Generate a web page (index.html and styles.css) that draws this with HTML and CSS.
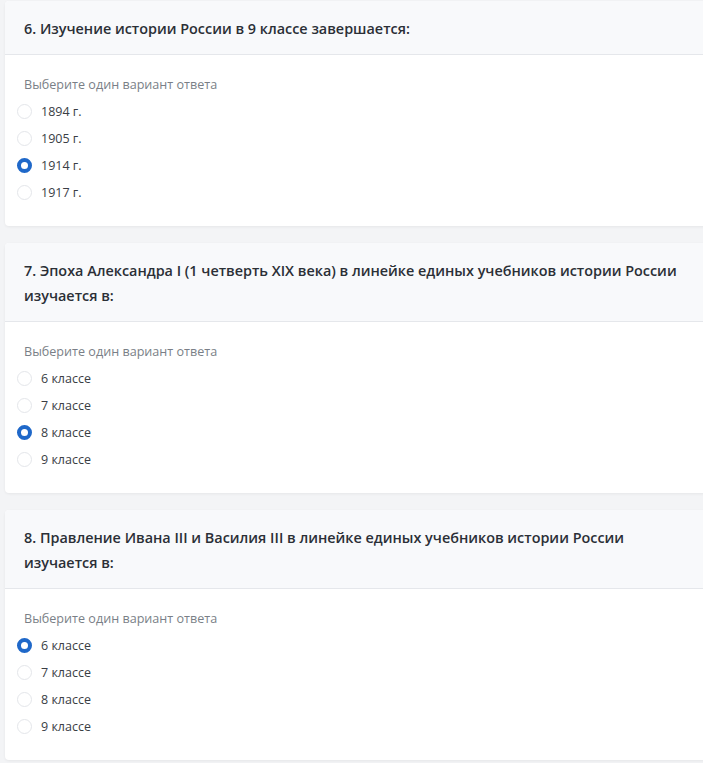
FILE: index.html
```html
<html>
  <head>
    <meta charset="utf-8" />
    <title>Тест</title>
    <link rel="stylesheet" href="styles.css">
  </head>
  <body>
    <div class="page">
      <div class="question">
        <div class="question-title">6. Изучение истории России в 9 классе завершается:</div>
        <div class="question-body">
          <div class="hint">Выберите один вариант ответа</div>
          <label class="option"><span class="radio"></span>1894 г.</label>
          <label class="option"><span class="radio"></span>1905 г.</label>
          <label class="option"><span class="radio checked"></span>1914 г.</label>
          <label class="option"><span class="radio"></span>1917 г.</label>
        </div>
      </div>
      <div class="question">
        <div class="question-title">7. Эпоха Александра I (1 четверть XIX века) в линейке единых учебников истории России изучается в:</div>
        <div class="question-body">
          <div class="hint">Выберите один вариант ответа</div>
          <label class="option"><span class="radio"></span>6 классе</label>
          <label class="option"><span class="radio"></span>7 классе</label>
          <label class="option"><span class="radio checked"></span>8 классе</label>
          <label class="option"><span class="radio"></span>9 классе</label>
        </div>
      </div>
      <div class="question">
        <div class="question-title">8. Правление Ивана III и Василия III в линейке единых учебников истории России изучается в:</div>
        <div class="question-body">
          <div class="hint">Выберите один вариант ответа</div>
          <label class="option"><span class="radio checked"></span>6 классе</label>
          <label class="option"><span class="radio"></span>7 классе</label>
          <label class="option"><span class="radio"></span>8 классе</label>
          <label class="option"><span class="radio"></span>9 классе</label>
        </div>
      </div>
    </div>
  </body>
</html>
```

FILE: styles.css
```css
* {
  box-sizing: border-box;
  margin: 0;
  padding: 0;
  font-family: 'Open Sans', 'Noto Sans', sans-serif;
}

body {
  background: #f3f4f6;
  overflow: hidden;
  color: #2f333a;
}

.page {
  display: flex;
  flex-direction: column;
  gap: 17px;
  padding: 1px 0 0 5px;
  margin-right: -40px;
}

.question {
  background: #fff;
  border-radius: 4px;
  box-shadow: 0 1px 3px rgba(0, 0, 0, 0.06);
  overflow: hidden;
}

.question-title {
  background: #f8f9fb;
  border-bottom: 1px solid #e5e7eb;
  padding: 15px 60px 13px 19px;
  font-size: 14.4px;
  font-weight: 600;
  line-height: 25px;
  color: #2b2f36;
}

.question-body {
  display: flex;
  flex-direction: column;
  padding: 20px 19px 20px;
}

.hint {
  font-size: 12.6px;
  line-height: 20px;
  color: #7a7f87;
  margin-bottom: 3px;
}

.option {
  display: flex;
  align-items: center;
  gap: 9px;
  height: 27px;
  margin-left: -7px;
  font-size: 12.5px;
  color: #3a3e45;
}

.radio {
  width: 15px;
  height: 15px;
  border-radius: 50%;
  border: 1px solid #e4e6ea;
  background: #fff;
  flex-shrink: 0;
}

.radio.checked {
  border: 4px solid #1f68c9;
}
```
